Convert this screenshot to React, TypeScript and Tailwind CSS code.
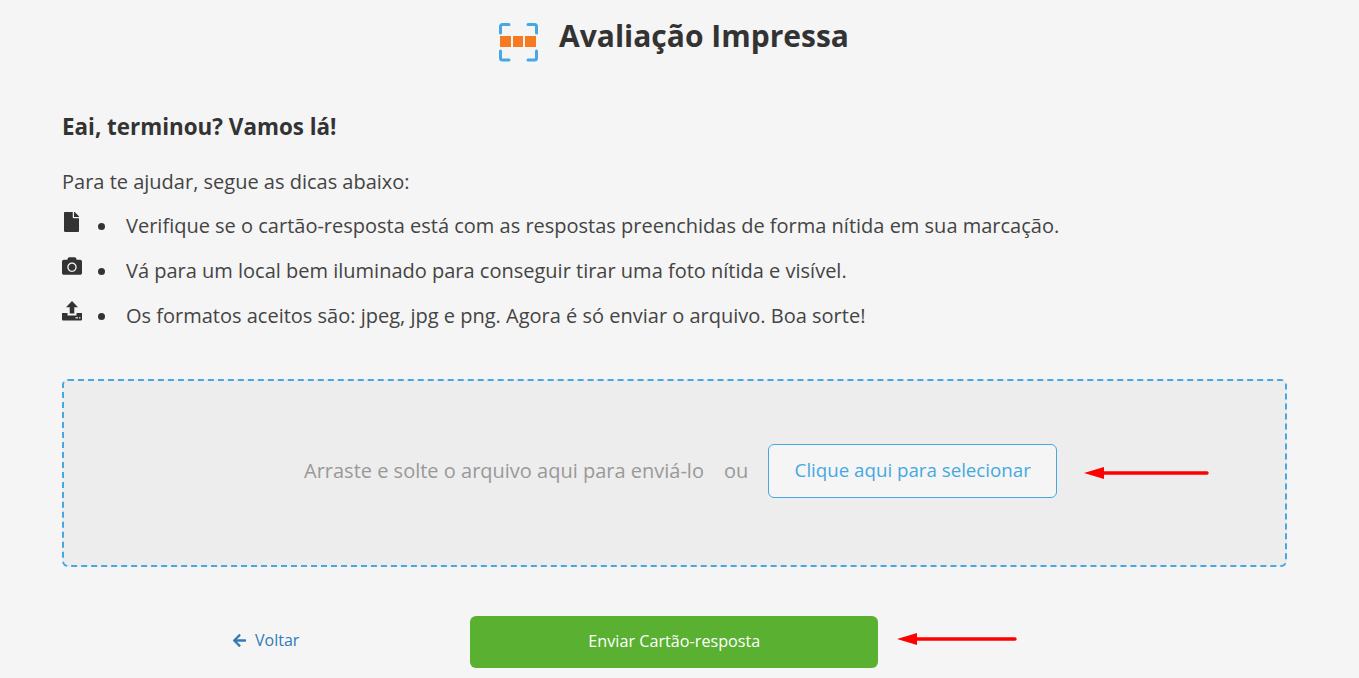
import React from "react";
import { FaFile, FaCamera, FaArrowLeft } from "react-icons/fa";

function Logo() {
  return (
    <svg width="40" height="40" viewBox="0 0 40 40" fill="none" className="mt-[14px] shrink-0">
      <g stroke="#45a8e2" strokeWidth="3" strokeLinecap="round" strokeLinejoin="round">
        <path d="M1.5 10V3.5a2 2 0 0 1 2-2H10" />
        <path d="M29 1.5h6.5a2 2 0 0 1 2 2V10" />
        <path d="M1.5 28v7a2 2 0 0 0 2 2H10" />
        <path d="M37.5 28v7a2 2 0 0 1-2 2H29" />
      </g>
      <rect x="1" y="13" width="11" height="11" fill="#f57a22" />
      <rect x="14" y="13" width="10" height="11" fill="#f57a22" />
      <rect x="26" y="13" width="11" height="11" fill="#f57a22" />
    </svg>
  );
}

function UploadIcon() {
  return (
    <svg width="20" height="20" viewBox="0 0 20 20" fill="#333333">
      <path d="M10 0 16 6.2H12.3V12.5H7.7V6.2H4Z" />
      <path d="M0 12H5.5V14.5H14.5V12H20V18.5a1 1 0 0 1-1 1H1a1 1 0 0 1-1-1Z" />
      <rect x="13.5" y="16.2" width="2.5" height="1.2" fill="#f5f5f5" />
      <rect x="17" y="16.2" width="1.4" height="1.2" fill="#f5f5f5" />
    </svg>
  );
}

function RedArrow({ width }: { width: number }) {
  return (
    <svg width={width} height="14" viewBox={`0 0 ${width} 14`}>
      <path d={`M0 7 20 1V5.3H${width - 2}a1.7 1.7 0 0 1 0 3.4H20V13Z`} fill="#ff0000" />
    </svg>
  );
}

const tips = [
  { icon: <FaFile className="text-[#333] text-[20px] w-[15px] ml-[-1px]" />, top: "mt-[0px]", text: "Verifique se o cartão-resposta está com as respostas preenchidas de forma nítida em sua marcação." },
  { icon: <FaCamera className="text-[#333] text-[20px]" />, top: "mt-[-1px]", text: "Vá para um local bem iluminado para conseguir tirar uma foto nítida e visível." },
  { icon: <UploadIcon />, top: "mt-[-1px]", text: "Os formatos aceitos são: jpeg, jpg e png. Agora é só enviar o arquivo. Boa sorte!" },
];

export default function App() {
  return (
    <div className="h-[678px] overflow-hidden bg-[#f5f5f5] pl-[62px] pr-[72px] font-['Open_Sans',sans-serif] text-[#333]">
      <header className="flex h-[72px] items-center justify-center gap-[20px] pr-[1px]">
        <Logo />
        <h1 className="text-[30px] leading-[40px] font-bold text-[#333]">Avaliação Impressa</h1>
      </header>

      <h2 className="mt-[38px] text-[22.4px] leading-[34px] font-bold text-[#333]">Eai, terminou? Vamos lá!</h2>

      <p className="mt-[24px] text-[20px] leading-[28px] text-[#444]">Para te ajudar, segue as dicas abaixo:</p>

      <ul className="mt-[16px] flex flex-col gap-[17px]">
        {tips.map((t) => (
          <li key={t.text} className="flex h-[28px] items-center text-[20px] leading-[28px] text-[#444]">
            <span className={`flex w-[20px] shrink-0 justify-center self-start ${t.top}`}>{t.icon}</span>
            <span className="ml-[16px] mr-[21px] size-[7px] shrink-0 rounded-full bg-[#333]" />
            <span>{t.text}</span>
          </li>
        ))}
      </ul>

      <section className="relative mt-[49px] flex h-[188px] items-center rounded-[6px] border-2 border-dashed border-[#45a8e2] bg-[#ededed] pb-[5px] pl-[240px]">
        <span className="text-[20px] text-[#999]">Arraste e solte o arquivo aqui para enviá-lo</span>
        <span className="ml-[20px] text-[20px] text-[#999]">ou</span>
        <button className="ml-[20px] h-[54px] w-[289px] rounded-[6px] border border-[#45a8e2] bg-[#f5f5f5] text-[18.72px] text-[#45a8e2]">
          Clique aqui para selecionar
        </button>
        <span className="absolute left-[1020px] top-[85px] flex">
          <RedArrow width={125} />
        </span>
      </section>

      <footer className="relative mt-[49px] flex items-center">
        <a className="ml-[170px] mt-[-4px] flex items-center gap-[8px] text-[16px] text-[#337ab7]">
          <FaArrowLeft className="text-[15px]" />
          Voltar
        </a>
        <button className="ml-[171px] h-[52px] w-[408px] rounded-[6px] bg-[#5ab031] pb-[2px] text-[16.2px] font-medium text-white">
          Enviar Cartão-resposta
        </button>
        <span className="absolute left-[835px] top-[16px] flex">
          <RedArrow width={120} />
        </span>
      </footer>
    </div>
  );
}
